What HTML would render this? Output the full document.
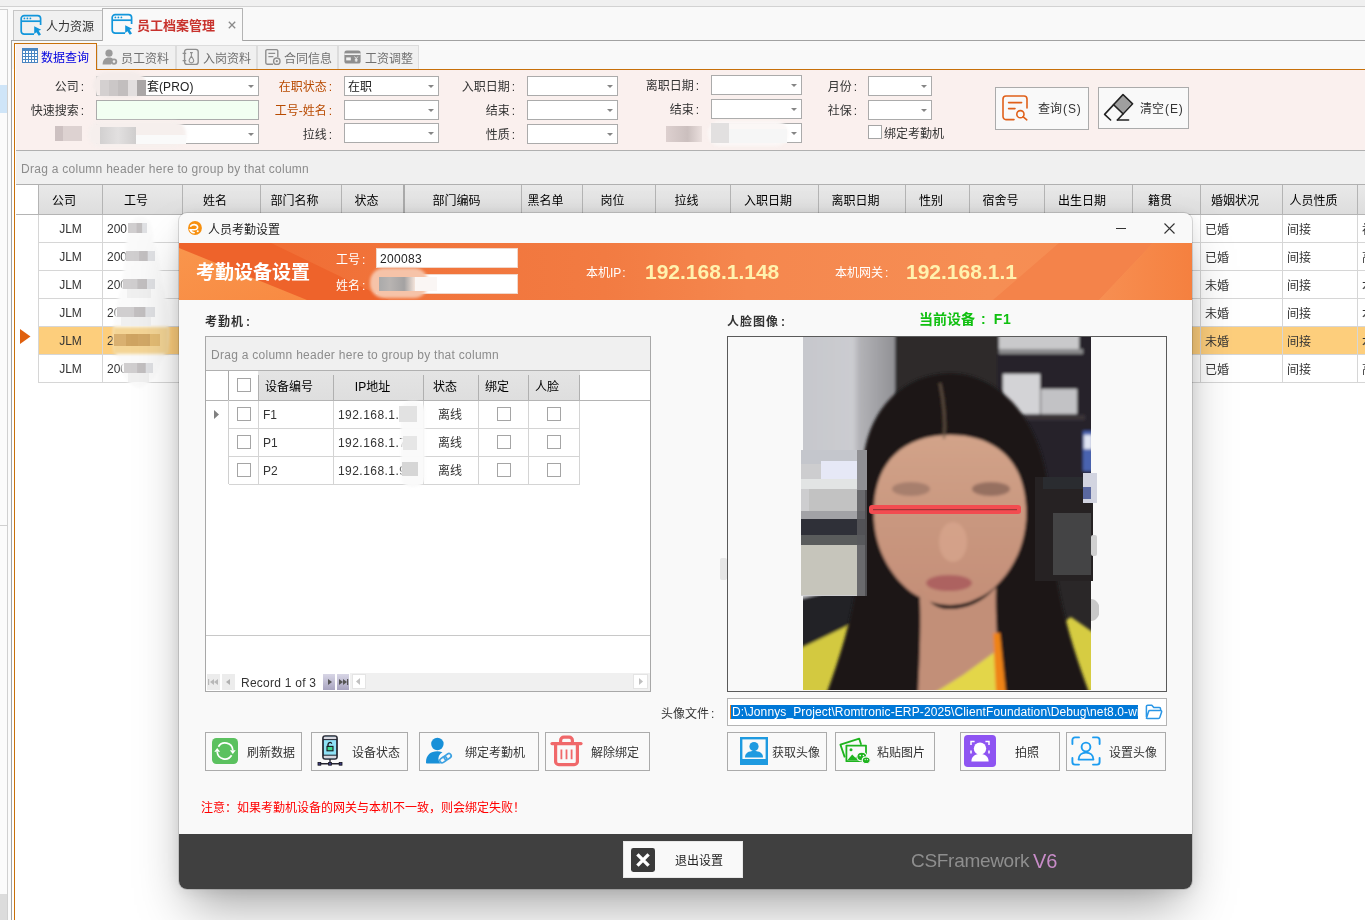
<!DOCTYPE html>
<html lang="zh-CN">
<head>
<meta charset="utf-8">
<title>员工档案管理 - 人员考勤设置</title>
<style>
*{box-sizing:border-box;margin:0;padding:0}
html,body{width:1365px;height:920px;overflow:hidden;background:#fff}
body{font-family:"Liberation Sans","Noto Sans CJK SC",sans-serif;font-size:12px;color:#333;-webkit-font-smoothing:antialiased}
#app{will-change:transform;position:relative;width:1365px;height:920px;overflow:hidden;background:#fff}
.a{position:absolute}
.t{position:absolute;white-space:nowrap;line-height:16px;height:16px}
.r{text-align:right}
.c{text-align:center}
/* main tabs */
.mtab{position:absolute;border:1px solid #c6c6c6;border-bottom:none;background:#f0f0f0}
/* sub tabs */
.stab{position:absolute;top:45px;height:24px;border:1px solid #dcdcdc;border-bottom:none;background:#f0f0f0;color:#707070}
.stab .t{top:5px}
/* combos */
.cb{position:absolute;height:20px;border:1px solid #ababab;background:#fff}
.cb:after{content:"";position:absolute;right:4px;top:8px;border:3px solid transparent;border-top:3px solid #858585;border-bottom:none}
.cb .t{left:3px;top:2px;color:#222}
.lb{position:absolute;white-space:nowrap;line-height:16px;height:16px;text-align:right;color:#333}
.btn{position:absolute;border:1px solid #ababab;background:#f9f9f9}
/* grid */
.hd{position:absolute;top:185px;height:29px;padding-right:13px;background:linear-gradient(#e9e9e9,#dddddd);border-right:1px solid #b4b4b4;color:#000;text-align:center;line-height:32px;white-space:nowrap}
.row{position:absolute;left:38px;width:1327px;height:28px;border-bottom:1px solid #d6d6d6}
.cell{position:absolute;top:0;height:27px;border-right:1px solid #d6d6d6;line-height:28px;white-space:nowrap;color:#333;overflow:hidden}
.sel .cell{background:#fdce7c}
.sel{background:#fdce7c}
.chk{position:absolute;width:14px;height:14px;border:1px solid #a5a5a5;background:#fff}
.lat{letter-spacing:.27px}
.lb i{font-style:normal;margin-left:2px}
.co{font-style:normal;margin-left:2px}
</style>
</head>
<body>
<div id="app">
<!-- ===== top chrome ===== -->
<div class="a" style="left:0;top:0;width:1365px;height:6px;background:#f0f0f0"></div>
<div class="a" style="left:0;top:6px;width:1365px;height:1px;background:#d2d2d2"></div>
<div class="a" style="left:0;top:7px;width:1365px;height:33px;background:#f9f9f9"></div>
<div class="a" style="left:0;top:40px;width:16px;height:880px;background:#fbfbfb"></div>
<!-- left dock strip -->
<div class="a" style="left:-1px;top:9px;width:9px;height:920px;border:1px solid #d0d0d0;background:#fbfbfb"></div>
<div class="a" style="left:0;top:85px;width:7px;height:28px;background:#cfe5f8"></div>
<div class="a" style="left:0;top:525px;width:7px;height:1px;background:#d0d0d0"></div>
<div class="a" style="left:0;top:894px;width:7px;height:26px;background:#dcdcdc"></div>
<!-- document frame -->
<div class="a" style="left:11px;top:40px;width:1360px;height:890px;border:1px solid #a2a2a2;background:#fff"></div>
<div class="a" style="left:12px;top:41px;width:1353px;height:28px;background:#f9f9f9"></div>

<!-- main tabs -->
<div class="mtab" style="left:13px;top:10px;width:90px;height:30px"></div>
<div class="mtab" style="left:102px;top:8px;width:141px;height:33px;background:#f9f9f9;border-color:#b4b4b4"></div>
<svg class="a" style="left:20px;top:14px" width="22" height="22" viewBox="0 0 22 22"><g fill="none" stroke="#1296db" stroke-width="1.7"><path d="M14 20.2H4.2a3 3 0 0 1-3-3V4.6a3 3 0 0 1 3-3h13.4a3 3 0 0 1 3 3V11"/><path d="M1.4 7.2h19"/></g><g fill="#1296db"><circle cx="4.4" cy="4.4" r=".9"/><circle cx="7.4" cy="4.4" r=".9"/><circle cx="10.4" cy="4.4" r=".9"/><path d="M14.2 12.2l7 3.6-2.6 1 2.4 3.6-2.2 1.4-2.4-3.6-2.2 1.8z"/></g></svg>
<div class="t" style="left:46px;top:19px;color:#333">人力资源</div>
<svg class="a" style="left:111px;top:13px" width="22" height="22" viewBox="0 0 22 22"><g fill="none" stroke="#1296db" stroke-width="1.7"><path d="M14 20.2H4.2a3 3 0 0 1-3-3V4.6a3 3 0 0 1 3-3h13.4a3 3 0 0 1 3 3V11"/><path d="M1.4 7.2h19"/></g><g fill="#1296db"><circle cx="4.4" cy="4.4" r=".9"/><circle cx="7.4" cy="4.4" r=".9"/><circle cx="10.4" cy="4.4" r=".9"/><path d="M14.2 12.2l7 3.6-2.6 1 2.4 3.6-2.2 1.4-2.4-3.6-2.2 1.8z"/></g></svg>
<div class="t" style="left:137px;top:18px;color:#c8322d;font-weight:bold;font-size:13px">员工档案管理</div>
<svg class="a" style="left:228px;top:21px" width="8" height="8" viewBox="0 0 8 8"><path d="M.8.8l6.4 6.4M7.2.8L.8 7.2" stroke="#8a8a8a" stroke-width="1.3" fill="none"/></svg>

<!-- ===== sub tabs ===== -->
<div class="a" style="left:14px;top:69px;width:1351px;height:1px;background:#c8700a"></div>
<div class="a" style="left:14px;top:43px;width:1px;height:877px;background:#c8700a"></div>
<div class="a" style="left:14px;top:43px;width:83px;height:27px;border:1px solid #c8700a;border-bottom:none;background:#faf0ee"></div>
<svg class="a" style="left:22px;top:48px" width="16" height="15" viewBox="0 0 16 15"><rect width="16" height="15" fill="#4a86c2"/><g fill="#fff"><rect x="1" y="3" width="2" height="2"/><rect x="4" y="3" width="2" height="2"/><rect x="7" y="3" width="2" height="2"/><rect x="10" y="3" width="2" height="2"/><rect x="13" y="3" width="2" height="2"/><rect x="1" y="6" width="2" height="2"/><rect x="4" y="6" width="2" height="2"/><rect x="7" y="6" width="2" height="2"/><rect x="10" y="6" width="2" height="2"/><rect x="13" y="6" width="2" height="2"/><rect x="1" y="9" width="2" height="2"/><rect x="4" y="9" width="2" height="2"/><rect x="7" y="9" width="2" height="2"/><rect x="10" y="9" width="2" height="2"/><rect x="13" y="9" width="2" height="2"/><rect x="1" y="12" width="2" height="2"/><rect x="4" y="12" width="2" height="2"/><rect x="7" y="12" width="2" height="2"/><rect x="10" y="12" width="2" height="2"/><rect x="13" y="12" width="2" height="2"/></g></svg>
<div class="t" style="left:41px;top:50px;color:#0000e0">数据查询</div>

<div class="stab" style="left:97px;width:79px"><div class="t" style="left:23px">员工资料</div></div>
<div class="stab" style="left:176px;width:81px"><div class="t" style="left:26px">入岗资料</div></div>
<div class="stab" style="left:257px;width:81px"><div class="t" style="left:26px">合同信息</div></div>
<div class="stab" style="left:338px;width:81px"><div class="t" style="left:26px">工资调整</div></div>
<!-- sub tab icons -->
<svg class="a" style="left:102px;top:49px" width="17" height="17" viewBox="0 0 17 17"><g fill="#9a9a9a"><circle cx="7" cy="4.2" r="3.6"/><path d="M0.6 15.6c0-4.4 2.6-7 6.4-7 1.6 0 3 .5 4 1.4l-2 5.6z"/><circle cx="12" cy="12.6" r="3.2"/></g><circle cx="12" cy="12.6" r="1.3" fill="#f0f0f0"/></svg>
<svg class="a" style="left:182px;top:48px" width="18" height="18" viewBox="0 0 18 18"><g fill="none" stroke="#8e8e8e" stroke-width="1.4"><rect x="2.6" y="1.4" width="13.6" height="15" rx="2.4"/><path d="M0.6 5.4h3.6M0.6 12.6h3.6"/><path d="M9.4 4.6v3.2M8 4.6h2.8M9.4 8l-2 3.4a2.3 2.3 0 1 0 4 0z" stroke-width="1.1"/></g></svg>
<svg class="a" style="left:264px;top:48px" width="18" height="18" viewBox="0 0 18 18"><g fill="none" stroke="#8e8e8e" stroke-width="1.4"><path d="M9 16.2H3.2a1.4 1.4 0 0 1-1.4-1.4V3a1.4 1.4 0 0 1 1.4-1.4h9.2A1.4 1.4 0 0 1 13.8 3v6"/><path d="M4.4 5.4h6.8M4.4 8.6h5"/><circle cx="12.8" cy="13.2" r="3.2"/></g><circle cx="12.8" cy="13.2" r="1.1" fill="#8e8e8e"/></svg>
<svg class="a" style="left:344px;top:50px" width="17" height="14" viewBox="0 0 17 14"><rect x="0.4" y="0.6" width="16.2" height="13" rx="2.2" fill="#8e8e8e"/><rect x="0.4" y="3.4" width="16.2" height="1.6" fill="#f0f0f0"/><rect x="2.2" y="7.4" width="4.6" height="3" fill="#f0f0f0"/><path d="M10.6 6.6l1.6 2.2 1.6-2.2M12.2 8.8v3M10.8 9.6h2.8M10.8 10.8h2.8" stroke="#f0f0f0" stroke-width=".9" fill="none"/></svg>

<!-- ===== filter panel ===== -->
<div class="a" style="left:15px;top:70px;width:1350px;height:80px;background:#faf0ee"></div>
<div class="a" style="left:15px;top:44px;width:1px;height:876px;background:#fff"></div>
<div class="a" style="left:16px;top:150px;width:1349px;height:1px;background:#b0b0b0"></div>
<div class="lb" style="right:1281px;top:79px">公司<i>:</i></div>
<div class="cb" style="left:96px;top:76px;width:163px"><div class="t"><span style="display:inline-block;width:47px"></span>套<span style="letter-spacing:.1px">(PRO)</span></div></div>
<div class="lb" style="right:1281px;top:103px">快速搜索<i>:</i></div>
<div class="a" style="left:96px;top:100px;width:163px;height:20px;border:1px solid #ababab;background:#f2fff2"></div>
<div class="cb" style="left:96px;top:124px;width:163px"></div>
<div class="lb" style="right:1033px;top:79px;color:#b84a00">在职状态<i>:</i></div>
<div class="cb" style="left:344px;top:76px;width:95px"><div class="t">在职</div></div>
<div class="lb" style="right:1033px;top:103px;color:#b84a00">工号-姓名<i>:</i></div>
<div class="cb" style="left:344px;top:100px;width:95px"></div>
<div class="lb" style="right:1033px;top:127px">拉线<i>:</i></div>
<div class="cb" style="left:344px;top:123px;width:95px"></div>
<div class="lb" style="right:850px;top:79px">入职日期<i>:</i></div>
<div class="cb" style="left:527px;top:76px;width:91px"></div>
<div class="lb" style="right:850px;top:103px">结束<i>:</i></div>
<div class="cb" style="left:527px;top:100px;width:91px"></div>
<div class="lb" style="right:850px;top:127px">性质<i>:</i></div>
<div class="cb" style="left:527px;top:124px;width:91px"></div>
<div class="lb" style="right:666px;top:78px">离职日期<i>:</i></div>
<div class="cb" style="left:711px;top:75px;width:91px"></div>
<div class="lb" style="right:666px;top:102px">结束<i>:</i></div>
<div class="cb" style="left:711px;top:99px;width:91px"></div>
<div class="cb" style="left:711px;top:123px;width:91px"></div>
<div class="lb" style="right:508px;top:79px">月份<i>:</i></div>
<div class="cb" style="left:868px;top:76px;width:64px"></div>
<div class="lb" style="right:508px;top:103px">社保<i>:</i></div>
<div class="cb" style="left:868px;top:100px;width:64px"></div>
<div class="chk" style="left:868px;top:125px"></div>
<div class="t" style="left:884px;top:126px">绑定考勤机</div>
<div class="btn" style="left:995px;top:87px;width:94px;height:43px"></div>
<svg class="a" style="left:1001px;top:94px" width="28" height="28" viewBox="0 0 28 28"><g fill="none" stroke="#e0601a" stroke-width="1.6" stroke-linecap="round"><path d="M13 25.6H5a3 3 0 0 1-3-3V5a3 3 0 0 1 3-3h18a3 3 0 0 1 3 3v9"/><path d="M7.6 8.6h13M7.6 14.6h6.4"/><circle cx="19.4" cy="20.2" r="3.6"/><path d="M22.2 22.8l3.6 3"/></g></svg>
<div class="t" style="left:1038px;top:101px">查询<span style="letter-spacing:.9px;margin-left:1px">(S)</span></div>
<div class="btn" style="left:1098px;top:87px;width:91px;height:42px"></div>
<svg class="a" style="left:1103px;top:93px" width="32" height="30" viewBox="0 0 32 30"><g fill="none" stroke="#222" stroke-width="1.6" stroke-linejoin="round" stroke-linecap="round"><path d="M7.6 27L1.6 21.4 20 1.6l9.6 9.2L14.4 27"/><path d="M14.4 27h11.2"/><path d="M10.6 11.6l9.6 9.2"/></g><path d="M20 2.6l8.4 8.2-8.2 9-8.6-8.2z" fill="#555" opacity=".55"/></svg>
<div class="t" style="left:1140px;top:101px">清空<span style="letter-spacing:.9px;margin-left:1px">(E)</span></div>
<div class="a" style="left:93px;top:72px;width:53px;height:26px;border-radius:13px;background:#f4ecea;filter:blur(1.2px)"></div>
<div class="a" style="left:100px;top:80px;width:46px;height:16px;background:linear-gradient(90deg,#d4d0d0 0 20%,#cbc7c7 20% 40%,#c2bebe 40% 60%,#e2dede 60% 80%,#aaa6a6 80%)"></div>
<div class="a" style="left:88px;top:121px;width:98px;height:26px;border-radius:13px;background:#f6efed;filter:blur(1.5px)"></div>
<div class="a" style="left:55px;top:126px;width:27px;height:15px;background:linear-gradient(90deg,#cdc1c1 0 30%,#ddd2d1 30%)"></div>
<div class="a" style="left:100px;top:127px;width:36px;height:17px;background:linear-gradient(90deg,#d2d0d0,#e2e0e0 50%,#cfcdcd)"></div>
<div class="a" style="left:136px;top:135px;width:50px;height:9px;background:#fafafa"></div>
<div class="a" style="left:708px;top:121px;width:80px;height:25px;border-radius:12px;background:#fbf7f6;filter:blur(1.5px)"></div>
<div class="a" style="left:666px;top:126px;width:36px;height:16px;background:linear-gradient(90deg,#ddd0cf,#cbbfbe 60%,#eadfdd)"></div>
<div class="a" style="left:711px;top:123px;width:18px;height:20px;background:#e2e0e0"></div>
<div class="a" style="left:729px;top:129px;width:58px;height:14px;background:#f6f6f6"></div>

<!-- ===== grid ===== -->
<div class="a" style="left:16px;top:151px;width:1349px;height:33px;background:#f0f0f0"></div>
<div class="t lat" style="left:21px;top:161px;color:#8c8c8c">Drag a column header here to group by that column</div>
<div class="a" style="left:16px;top:184px;width:1349px;height:1px;background:#b0b0b0"></div>
<div class="a" style="left:16px;top:185px;width:22px;height:735px;background:#fff"></div>
<div class="a" style="left:16px;top:214px;width:1349px;height:1px;background:#b4b4b4"></div>
<div class="a" style="left:38px;top:185px;width:1327px;height:29px;background:linear-gradient(#e9e9e9,#dddddd)"></div>
<div class="a" style="left:38px;top:185px;width:1px;height:29px;background:#b4b4b4"></div>
<div class="hd" style="left:39px;width:64px">公司</div>
<div class="hd" style="left:103px;width:80px">工号</div>
<div class="hd" style="left:183px;width:78px">姓名</div>
<div class="hd" style="left:261px;width:81px">部门名称</div>
<div class="hd" style="left:342px;width:63px">状态</div>
<div class="hd" style="left:405px;width:117px">部门编码</div>
<div class="hd" style="left:522px;width:61px">黑名单</div>
<div class="hd" style="left:583px;width:73px">岗位</div>
<div class="hd" style="left:656px;width:75px">拉线</div>
<div class="hd" style="left:731px;width:88px">入职日期</div>
<div class="hd" style="left:819px;width:87px">离职日期</div>
<div class="hd" style="left:906px;width:64px">性别</div>
<div class="hd" style="left:970px;width:75px">宿舍号</div>
<div class="hd" style="left:1045px;width:88px">出生日期</div>
<div class="hd" style="left:1133px;width:68px">籍贯</div>
<div class="hd" style="left:1201px;width:82px">婚姻状况</div>
<div class="hd" style="left:1283px;width:75px">人员性质</div>
<div class="hd" style="left:1358px;width:83px"></div>
<div class="a" style="left:403px;top:185px;width:2px;height:29px;background:#aaa"></div>
<div class="row" style="top:215px">
<div class="cell c" style="left:0;width:65px;border-left:1px solid #d6d6d6">JLM</div>
<div class="cell" style="left:65px;width:80px;padding-left:4px">200</div>
<div class="cell" style="left:1094px;width:69px"></div>
<div class="cell" style="left:1163px;width:82px;padding-left:4px;line-height:30px">已婚</div>
<div class="cell" style="left:1245px;width:75px;padding-left:4px;line-height:30px">间接</div>
<div class="cell" style="left:1320px;width:40px;padding-left:4px;line-height:30px;border-right:none">初中</div>
</div>
<div class="row" style="top:243px">
<div class="cell c" style="left:0;width:65px;border-left:1px solid #d6d6d6">JLM</div>
<div class="cell" style="left:65px;width:80px;padding-left:4px">200</div>
<div class="cell" style="left:1094px;width:69px"></div>
<div class="cell" style="left:1163px;width:82px;padding-left:4px;line-height:30px">已婚</div>
<div class="cell" style="left:1245px;width:75px;padding-left:4px;line-height:30px">间接</div>
<div class="cell" style="left:1320px;width:40px;padding-left:4px;line-height:30px;border-right:none">高中</div>
</div>
<div class="row" style="top:271px">
<div class="cell c" style="left:0;width:65px;border-left:1px solid #d6d6d6">JLM</div>
<div class="cell" style="left:65px;width:80px;padding-left:4px">200</div>
<div class="cell" style="left:1094px;width:69px"></div>
<div class="cell" style="left:1163px;width:82px;padding-left:4px;line-height:30px">未婚</div>
<div class="cell" style="left:1245px;width:75px;padding-left:4px;line-height:30px">间接</div>
<div class="cell" style="left:1320px;width:40px;padding-left:4px;line-height:30px;border-right:none">本科</div>
</div>
<div class="row" style="top:299px">
<div class="cell c" style="left:0;width:65px;border-left:1px solid #d6d6d6">JLM</div>
<div class="cell" style="left:65px;width:80px;padding-left:4px">200</div>
<div class="cell" style="left:1094px;width:69px"></div>
<div class="cell" style="left:1163px;width:82px;padding-left:4px;line-height:30px">未婚</div>
<div class="cell" style="left:1245px;width:75px;padding-left:4px;line-height:30px">间接</div>
<div class="cell" style="left:1320px;width:40px;padding-left:4px;line-height:30px;border-right:none">本科</div>
</div>
<div class="row sel" style="top:327px">
<div class="cell c" style="left:0;width:65px;border-left:1px solid #d6d6d6">JLM</div>
<div class="cell" style="left:65px;width:80px;padding-left:4px">200</div>
<div class="cell" style="left:1094px;width:69px"></div>
<div class="cell" style="left:1163px;width:82px;padding-left:4px;line-height:30px">未婚</div>
<div class="cell" style="left:1245px;width:75px;padding-left:4px;line-height:30px">间接</div>
<div class="cell" style="left:1320px;width:40px;padding-left:4px;line-height:30px;border-right:none">本科</div>
</div>
<div class="row" style="top:355px">
<div class="cell c" style="left:0;width:65px;border-left:1px solid #d6d6d6">JLM</div>
<div class="cell" style="left:65px;width:80px;padding-left:4px">200</div>
<div class="cell" style="left:1094px;width:69px"></div>
<div class="cell" style="left:1163px;width:82px;padding-left:4px;line-height:30px">已婚</div>
<div class="cell" style="left:1245px;width:75px;padding-left:4px;line-height:30px">间接</div>
<div class="cell" style="left:1320px;width:40px;padding-left:4px;line-height:30px;border-right:none">高中</div>
</div>
<svg class="a" style="left:20px;top:329px" width="11" height="15" viewBox="0 0 11 15"><path d="M0 0l10.5 7.5L0 15z" fill="#e0600e"/></svg>
<svg class="a" style="left:100px;top:210px" width="90" height="185" viewBox="100 210 90 185"><defs><filter id="rb" x="-20%" y="-10%" width="140%" height="120%"><feGaussianBlur stdDeviation="1.6"/></filter></defs><path d="M140 217C150 217 153 226 153 240C158 252 160 262 161 280C166 296 169 312 168 330C168 345 166 356 160 362C158 372 154 382 140 388C128 386 122 376 121 364C115 356 113 345 114 330C114 316 116 304 121 290C123 276 125 262 126 246C127 230 130 217 140 217Z" fill="#fafafa" filter="url(#rb)"/><rect x="113" y="327" width="56" height="27" fill="#f4d596" filter="url(#rb)"/><rect x="128" y="223" width="19" height="10" fill="#d0cecf"/><rect x="136.6" y="223" width="5.7" height="10" fill="#c2bfc0"/><rect x="142.2" y="223" width="4.8" height="10" fill="#dfe0e3"/><rect x="126" y="251" width="29" height="10" fill="#d0cecf"/><rect x="139.1" y="251" width="8.7" height="10" fill="#c2bfc0"/><rect x="147.8" y="251" width="7.2" height="10" fill="#dfe0e3"/><rect x="123" y="279" width="32" height="10" fill="#d0cecf"/><rect x="137.4" y="279" width="9.6" height="10" fill="#c2bfc0"/><rect x="147.0" y="279" width="8.0" height="10" fill="#dfe0e3"/><rect x="127" y="289" width="24" height="9" fill="#f0f0f0"/><rect x="117" y="307" width="38" height="10" fill="#d0cecf"/><rect x="134.1" y="307" width="11.4" height="10" fill="#c2bfc0"/><rect x="145.5" y="307" width="9.5" height="10" fill="#dfe0e3"/><rect x="121" y="317" width="30" height="9" fill="#f0f0f0"/><rect x="114" y="334" width="46" height="12" fill="#d9b070"/><rect x="126" y="334" width="12" height="12" fill="#cfa462"/><rect x="138" y="334" width="12" height="12" fill="#d2a866"/><rect x="150" y="334" width="10" height="12" fill="#e4bc74"/><rect x="124" y="363" width="29" height="10" fill="#d0cecf"/><rect x="137.1" y="363" width="8.7" height="10" fill="#c2bfc0"/><rect x="145.8" y="363" width="7.2" height="10" fill="#dfe0e3"/><rect x="128" y="373" width="21" height="9" fill="#f0f0f0"/></svg>
<!-- GRID-ROWS-END -->

<!-- DIALOG-START -->
<div class="a" id="dlg" style="left:179px;top:213px;width:1013px;height:676px;border-radius:8px;background:#f9f9f9;box-shadow:0 0 0 1px rgba(0,0,0,.13),0 26px 48px -10px rgba(0,0,0,.36),0 2px 14px rgba(0,0,0,.08);overflow:hidden">
<svg class="a" style="left:9px;top:8px" width="14" height="14" viewBox="0 0 15 15"><circle cx="7.500" cy="7.500" r="7.400" fill="#f7900f"/><path d="M3 5.400c1.600-2.200 6.400-2.200 7.200.6.700 2.600-2 3.400-4 3.400H2.400c.6 1.800 2.400 3 4.200 3.200" fill="none" stroke="#fff" stroke-width="1.800" stroke-linecap="round"/><circle cx="10.400" cy="11" r="1.100" fill="#fff"/></svg>
<div class="t" style="left:29px;top:9px;color:#222">人员考勤设置</div>
<div class="a" style="left:937px;top:15px;width:10px;height:1px;background:#333"></div>
<svg class="a" style="left:985px;top:10px" width="11" height="11" viewBox="0 0 11 11"><path d="M.5.5l10 10M10.5.5l-10 10" stroke="#333" stroke-width="1.1" fill="none"/></svg>
<svg class="a" style="left:0;top:30px" width="1014" height="57" viewBox="0 0 1014 57"><defs><linearGradient id="bg" x1="0" x2="1014" y1="0" y2="0" gradientUnits="userSpaceOnUse"><stop offset="0" stop-color="#ef6a30"/><stop offset=".2" stop-color="#f1733a"/><stop offset=".42" stop-color="#f27b42"/><stop offset=".56" stop-color="#f5874e"/><stop offset=".8" stop-color="#f68e54"/><stop offset="1" stop-color="#f68c50"/></linearGradient><linearGradient id="tri" x1="0" x2="1" y1="0" y2="1"><stop offset="0" stop-color="#f9954c"/><stop offset="1" stop-color="#f88a42"/></linearGradient><linearGradient id="rc" x1="920" x2="1014" y1="0" y2="0" gradientUnits="userSpaceOnUse"><stop offset="0" stop-color="#f78f52"/><stop offset="1" stop-color="#f5803f"/></linearGradient></defs><rect width="1014" height="57" fill="url(#bg)"/><path d="M0 0h92l118 57H0z" fill="#ee632b"/><path d="M0 5l128 52H0z" fill="url(#tri)"/><path d="M880 0h94l-54 57H814z" fill="#f4834a"/><path d="M974 0h40v57h-94z" fill="url(#rc)"/></svg>
<div class="t" style="left:17px;top:47px;font-size:19px;font-weight:bold;color:#fff;line-height:26px;height:26px">考勤设备设置</div>
<div class="t" style="left:157px;top:39px;color:#fff">工号<i class="co">:</i></div>
<div class="t" style="left:157px;top:65px;color:#fff">姓名<i class="co">:</i></div>
<div class="a" style="left:197px;top:35px;width:142px;height:20px;background:#fff;border:1px solid #f0d8cc"></div>
<div class="t" style="left:201px;top:38px;color:#222;letter-spacing:.33px">200083</div>
<div class="a" style="left:197px;top:61px;width:142px;height:20px;background:#fff;border:1px solid #f0d8cc"></div>
<div class="a" style="left:191px;top:55px;width:58px;height:30px;border-radius:14px;background:#f6c3a8;filter:blur(1.5px)"></div>
<div class="a" style="left:200px;top:64px;width:36px;height:14px;background:linear-gradient(90deg,#aaa,#b8b4b2 30%,#a4a2a2 70%,#f4e4da)"></div>
<div class="a" style="left:236px;top:64px;width:22px;height:14px;background:#faf6f4"></div>
<div class="t" style="left:407px;top:52px;color:#fff">本机IP<i class="co" style="margin-left:1px">:</i></div>
<div class="t" style="left:466px;top:46px;font-size:21px;font-weight:bold;color:#fff2ae;line-height:26px;height:26px">192.168.1.148</div>
<div class="t" style="left:656px;top:52px;color:#fff">本机网关<i class="co">:</i></div>
<div class="t" style="left:727px;top:46px;font-size:21px;font-weight:bold;color:#fff2ae;line-height:26px;height:26px">192.168.1.1</div>
<div class="t" style="left:26px;top:101px;font-weight:bold;color:#333;letter-spacing:1px">考勤机<i class="co">:</i></div>
<div class="t" style="left:548px;top:101px;font-weight:bold;color:#333;letter-spacing:1px">人脸图像<i class="co">:</i></div>
<div class="t" style="left:740px;top:96px;font-weight:bold;font-size:14px;color:#10c010;line-height:20px;height:20px">当前设备<i class="co" style="margin-left:6px">:</i><span style="margin-left:8px;letter-spacing:.8px">F1</span></div>
<div class="a" style="left:26px;top:123px;width:446px;height:356px;border:1px solid #a8a8a8;background:#fff"></div>
<div class="a" style="left:27px;top:124px;width:444px;height:33px;background:#f0f0f0"></div>
<div class="t" style="left:32px;top:134px;color:#8c8c8c;letter-spacing:.27px">Drag a column header here to group by that column</div>
<div class="a" style="left:27px;top:157px;width:444px;height:1px;background:#b0b0b0"></div>
<div class="a" style="left:27px;top:187px;width:444px;height:1px;background:#b4b4b4"></div>
<div class="a" style="left:49px;top:158px;width:1px;height:113px;background:#d0d0d0"></div>
<div class="a" style="left:49px;top:158px;width:1px;height:29px;background:#a8a8a8"></div>
<div class="a" style="left:79px;top:158px;width:322px;height:29px;background:linear-gradient(#e4e4e4,#dedede)"></div>
<div class="a" style="left:79px;top:162px;width:1px;height:25px;background:#b0b0b0"></div>
<div class="a" style="left:80px;top:158px;width:74px;height:29px;line-height:33px;color:#000;white-space:nowrap;padding-left:6px">设备编号</div>
<div class="a" style="left:154px;top:162px;width:1px;height:25px;background:#b0b0b0"></div>
<div class="a" style="left:155px;top:158px;width:89px;height:29px;text-align:center;line-height:33px;color:#000;white-space:nowrap;padding-right:12px">IP地址</div>
<div class="a" style="left:244px;top:162px;width:1px;height:25px;background:#b0b0b0"></div>
<div class="a" style="left:245px;top:158px;width:54px;height:29px;text-align:center;line-height:33px;color:#000;white-space:nowrap;padding-right:12px">状态</div>
<div class="a" style="left:299px;top:162px;width:1px;height:25px;background:#b0b0b0"></div>
<div class="a" style="left:300px;top:158px;width:49px;height:29px;line-height:33px;color:#000;white-space:nowrap;padding-left:6px">绑定</div>
<div class="a" style="left:349px;top:162px;width:1px;height:25px;background:#b0b0b0"></div>
<div class="a" style="left:350px;top:158px;width:50px;height:29px;line-height:33px;color:#000;white-space:nowrap;padding-left:6px">人脸</div>
<div class="a" style="left:400px;top:162px;width:1px;height:25px;background:#b0b0b0"></div>
<div class="chk" style="left:58px;top:165px;width:14px;height:14px;"></div>
<div class="a" style="left:50px;top:215px;width:351px;height:1px;background:#d4d4d4"></div>
<div class="a" style="left:79px;top:188px;width:1px;height:28px;background:#d4d4d4"></div>
<div class="a" style="left:154px;top:188px;width:1px;height:28px;background:#d4d4d4"></div>
<div class="a" style="left:244px;top:188px;width:1px;height:28px;background:#d4d4d4"></div>
<div class="a" style="left:299px;top:188px;width:1px;height:28px;background:#d4d4d4"></div>
<div class="a" style="left:349px;top:188px;width:1px;height:28px;background:#d4d4d4"></div>
<div class="a" style="left:400px;top:188px;width:1px;height:28px;background:#d4d4d4"></div>
<div class="chk" style="left:58px;top:194px;width:14px;height:14px;"></div>
<div class="t" style="left:84px;top:194px;">F1</div>
<div class="t" style="left:159px;top:194px;letter-spacing:.45px">192.168.1.</div>
<div class="t" style="left:259px;top:194px;">离线</div>
<div class="chk" style="left:318px;top:194px;width:14px;height:14px;"></div>
<div class="chk" style="left:368px;top:194px;width:14px;height:14px;"></div>
<div class="a" style="left:50px;top:243px;width:351px;height:1px;background:#d4d4d4"></div>
<div class="a" style="left:79px;top:216px;width:1px;height:28px;background:#d4d4d4"></div>
<div class="a" style="left:154px;top:216px;width:1px;height:28px;background:#d4d4d4"></div>
<div class="a" style="left:244px;top:216px;width:1px;height:28px;background:#d4d4d4"></div>
<div class="a" style="left:299px;top:216px;width:1px;height:28px;background:#d4d4d4"></div>
<div class="a" style="left:349px;top:216px;width:1px;height:28px;background:#d4d4d4"></div>
<div class="a" style="left:400px;top:216px;width:1px;height:28px;background:#d4d4d4"></div>
<div class="chk" style="left:58px;top:222px;width:14px;height:14px;"></div>
<div class="t" style="left:84px;top:222px;">P1</div>
<div class="t" style="left:159px;top:222px;letter-spacing:.45px">192.168.1.7</div>
<div class="t" style="left:259px;top:222px;">离线</div>
<div class="chk" style="left:318px;top:222px;width:14px;height:14px;"></div>
<div class="chk" style="left:368px;top:222px;width:14px;height:14px;"></div>
<div class="a" style="left:50px;top:271px;width:351px;height:1px;background:#d4d4d4"></div>
<div class="a" style="left:79px;top:244px;width:1px;height:28px;background:#d4d4d4"></div>
<div class="a" style="left:154px;top:244px;width:1px;height:28px;background:#d4d4d4"></div>
<div class="a" style="left:244px;top:244px;width:1px;height:28px;background:#d4d4d4"></div>
<div class="a" style="left:299px;top:244px;width:1px;height:28px;background:#d4d4d4"></div>
<div class="a" style="left:349px;top:244px;width:1px;height:28px;background:#d4d4d4"></div>
<div class="a" style="left:400px;top:244px;width:1px;height:28px;background:#d4d4d4"></div>
<div class="chk" style="left:58px;top:250px;width:14px;height:14px;"></div>
<div class="t" style="left:84px;top:250px;">P2</div>
<div class="t" style="left:159px;top:250px;letter-spacing:.45px">192.168.1.9</div>
<div class="t" style="left:259px;top:250px;">离线</div>
<div class="chk" style="left:318px;top:250px;width:14px;height:14px;"></div>
<div class="chk" style="left:368px;top:250px;width:14px;height:14px;"></div>
<svg class="a" style="left:35px;top:197px" width="5" height="9" viewBox="0 0 5 9"><path d="M0 0l5 4.5L0 9z" fill="#808080"/></svg>
<div class="a" style="left:222px;top:188px;width:24px;height:86px;border-radius:10px;background:rgba(250,250,250,.97);filter:blur(1.2px)"></div>
<div class="a" style="left:220px;top:193px;width:18px;height:16px;background:#e2e2e2"></div>
<div class="a" style="left:224px;top:223px;width:14px;height:14px;background:#e6e6e6"></div>
<div class="a" style="left:223px;top:249px;width:16px;height:14px;background:#d6d6d6"></div>
<div class="a" style="left:27px;top:422px;width:444px;height:1px;background:#c8c8c8"></div>
<div class="a" style="left:27px;top:460px;width:444px;height:18px;background:#f0f0f0"></div>
<div class="a" style="left:27px;top:460px;width:144px;height:18px;background:#fff"></div>
<div class="a" style="left:28px;top:461px;width:13px;height:16px;background:#ececec"></div>
<div class="a" style="left:43px;top:461px;width:13px;height:16px;background:#ececec"></div>
<div class="a" style="left:144px;top:461px;width:12px;height:16px;background:linear-gradient(#d8d6e6,#a8a4c0)"></div>
<div class="a" style="left:158px;top:461px;width:12px;height:16px;background:linear-gradient(#d8d6e6,#a8a4c0)"></div>
<div class="a" style="left:173px;top:461px;width:14px;height:15px;background:#fff;border:1px solid #e4e4e4"></div>
<div class="a" style="left:454px;top:461px;width:15px;height:15px;background:#fff;border:1px solid #e4e4e4"></div>
<svg class="a" style="left:0;top:0" width="1014" height="676" viewBox="0 0 1014 676"><rect x="29" y="466" width="1.2" height="6" fill="#b8b8b8"/><path transform="translate(31,466)" d="M4 0L0 3.0L4 6z" fill="#b8b8b8"/><path transform="translate(35,466)" d="M4 0L0 3.0L4 6z" fill="#b8b8b8"/><path transform="translate(47,466)" d="M4 0L0 3.0L4 6z" fill="#b0b0b0"/><path transform="translate(149,466)" d="M0 0L4 3.0L0 6z" fill="#555"/><path transform="translate(160,466)" d="M0 0L4 3.0L0 6z" fill="#555"/><path transform="translate(164,466)" d="M0 0L4 3.0L0 6z" fill="#555"/><rect x="168" y="466" width="1.2" height="6" fill="#555"/><path transform="translate(177,465)" d="M4 0L0 3.5L4 7z" fill="#c0c0c0"/><path transform="translate(460,465)" d="M0 0L4 3.5L0 7z" fill="#c0c0c0"/></svg>
<div class="t" style="left:62px;top:462px;color:#333;letter-spacing:.25px">Record 1 of 3</div>
<div class="btn" style="left:26px;top:519px;width:97px;height:39px;"></div>
<div class="t" style="left:68px;top:532px;">刷新数据</div>
<div class="btn" style="left:132px;top:519px;width:97px;height:39px;"></div>
<div class="t" style="left:173px;top:532px;">设备状态</div>
<div class="btn" style="left:240px;top:519px;width:120px;height:39px;"></div>
<div class="t" style="left:286px;top:532px;">绑定考勤机</div>
<div class="btn" style="left:366px;top:519px;width:105px;height:39px;"></div>
<div class="t" style="left:412px;top:532px;">解除绑定</div>
<svg class="a" style="left:33px;top:525px" width="26" height="26" viewBox="0 0 26 26"><rect width="26" height="26" rx="4.4" fill="#5bc15f"/><g fill="none" stroke="#fff" stroke-width="1.700"><path d="M6.400 8.700A7.800 7.800 0 0 1 20.800 12"/><path d="M19.600 17.300A7.800 7.800 0 0 1 5.200 14"/></g><path d="M17.900 12.200h5.800l-2.900 3.800zM2.300 13.800h5.800L5.200 10z" fill="#fff"/></svg>
<svg class="a" style="left:138px;top:522px" width="26" height="32" viewBox="0 0 26 32"><rect x="6" y="1" width="14" height="23" rx="2.200" fill="#8fe2f6" stroke="#22222c" stroke-width="1.700"/><rect x="6.800" y="1.800" width="12.400" height="2.600" fill="#d8d8e0"/><rect x="6.800" y="20.400" width="12.400" height="2.800" fill="#d8d8e0"/><path d="M6 4.600h14M6 20.200h14" stroke="#22222c" stroke-width="1"/><path d="M11 11.400V9.400a2 2 0 0 1 3.800-.8" fill="none" stroke="#16161c" stroke-width="1.300"/><rect x="10" y="11.400" width="6" height="4.400" fill="#3fdc92" stroke="#16161c" stroke-width="1.100"/><path d="M13 24v4.600M2.400 28.800h21.200" stroke="#22222c" stroke-width="1.400" fill="none"/><g fill="#3c3c80" stroke="#16161c" stroke-width=".8"><rect x="1" y="27.400" width="2.800" height="2.800"/><rect x="11.600" y="27.400" width="2.800" height="2.800"/><rect x="22.200" y="27.400" width="2.800" height="2.800"/></g></svg>
<svg class="a" style="left:246px;top:524px" width="30" height="30" viewBox="0 0 30 30"><g fill="#1890d8"><circle cx="12.400" cy="7" r="6.200"/><path d="M1 25.400c0-7.400 4.600-11.200 11.400-11.200 3 0 5.600.8 7.600 2.600L17 26.600H2a1 1 0 0 1-1-1.200z"/></g><circle cx="20.400" cy="21.600" r="7" fill="#f9f9f9"/><g fill="none" stroke="#3ea2e2" stroke-width="1.700" stroke-linecap="round"><rect x="14.600" y="20.400" width="7.400" height="4.600" rx="2.300" transform="rotate(-35 18.300 22.700)"/><rect x="19" y="17.400" width="7.400" height="4.600" rx="2.300" transform="rotate(-35 22.700 19.700)"/></g></svg>
<svg class="a" style="left:371px;top:522px" width="33" height="32" viewBox="0 0 33 32"><g fill="none" stroke="#f0686a" stroke-width="3.200" stroke-linecap="round" stroke-linejoin="round"><path d="M2 8.600h29"/><path d="M10.600 8V5.400a3.200 3.200 0 0 1 3.200-3.200h5.400a3.200 3.200 0 0 1 3.200 3.200V8"/><path d="M5.600 9.400v17a3.200 3.200 0 0 0 3.200 3.200h15.400a3.200 3.200 0 0 0 3.200-3.200v-17"/></g><g stroke="#f0686a" stroke-width="1.800" fill="none"><path d="M11.400 14.600v9.600M16.500 14.600v9.600M21.600 14.600v9.600"/></g></svg>
<div class="t" style="left:22px;top:587px;color:#ff0000">注意：如果考勤机设备的网关与本机不一致，则会绑定失败！</div>
<div class="a" style="left:548px;top:123px;width:440px;height:356px;border:1px solid #5a5a5a;background:#f9f9f9"></div>
<!-- PHOTO-START --><svg class="a" style="left:616px;top:124px" width="304" height="353" viewBox="-8 0 304 353">
<defs><filter id="bl" x="-5%" y="-5%" width="110%" height="110%"><feGaussianBlur stdDeviation="1.6"/></filter>
<filter id="bl2" x="-5%" y="-5%" width="110%" height="110%"><feGaussianBlur stdDeviation="3"/></filter>
<clipPath id="pc"><rect x="0" y="0" width="288" height="353"/></clipPath>
<linearGradient id="wall" x1="0" x2="1" y1="0" y2="0"><stop offset="0" stop-color="#c6c7cc"/><stop offset=".55" stop-color="#cbccd0"/><stop offset=".62" stop-color="#b2b2b6"/><stop offset="1" stop-color="#8f8f93"/></linearGradient>
<linearGradient id="skin" x1="0" x2="0" y1="0" y2="1"><stop offset="0" stop-color="#d2a389"/><stop offset=".5" stop-color="#c9977f"/><stop offset="1" stop-color="#c48e77"/></linearGradient>
</defs>
<g clip-path="url(#pc)">
<rect x="0" y="0" width="288" height="353" fill="#2a2728"/>
<g filter="url(#bl)">
<rect x="-4" y="-4" width="98" height="270" fill="url(#wall)"/>
<rect x="92" y="-4" width="104" height="120" fill="#2e2a2b"/>
<rect x="194" y="-4" width="100" height="200" fill="#25232a"/>
<rect x="196" y="-4" width="80" height="16" fill="#c9c9cb"/>
<rect x="196" y="12" width="84" height="5" fill="#8a8a8c"/>
<rect x="200" y="37" width="37" height="40" fill="#d3d3d6"/>
<rect x="238" y="52" width="36" height="25" fill="#c2c2c5"/>
<rect x="196" y="78" width="86" height="5" fill="#3a3638"/>
<rect x="280" y="94" width="10" height="40" fill="#4a64b0"/>
<rect x="281" y="98" width="8" height="14" fill="#dfe4f2"/>
<path d="M-4 262l66-16v60l-66 26z" fill="#242428"/>
<path d="M-4 312l50-24 26 8-12 62h-64z" fill="#d3c940"/>
<path d="M252 290l16-10 26 18v60h-50z" fill="#d6cc42"/>
</g>
<g filter="url(#bl)">
<path d="M147 36c-46 0-80 36-86 82-5 40-3 84-8 128-4 36-16 74-30 112h120l20-50 20 50h104c-12-32-22-62-30-100-8-40-6-92-16-132-12-50-48-90-94-90z" fill="#1b1819"/>
<path d="M147 98C100 98 73 125 71 170C69 205 84 236 108 255C122 264 134 268 147 268C160 268 172 264 186 255C210 236 225 205 223 170C221 125 194 98 147 98Z" fill="url(#skin)"/>
<path d="M116 250c2 20 2 50-1 108h84c-5-50-7-84-6-108-14 16-30 22-46 22s-22-8-31-22z" fill="#c28f78"/>
<path d="M128 358l32-20 36-26 6 46z" fill="#e3d648"/>
<path d="M190 296l7 0 6 60h-10z" fill="#ef8318"/>
<path d="M137 46c4 20 6 36 4 56" stroke="#7a6450" stroke-width="2.400" fill="none" opacity=".7"/>
<ellipse cx="146" cy="246" rx="23" ry="8" fill="#ad6260"/>
<ellipse cx="108" cy="152" rx="19" ry="7" fill="#a07a6a" opacity=".85"/>
<ellipse cx="188" cy="152" rx="19" ry="7" fill="#8c675a" opacity=".85"/>
<ellipse cx="150" cy="205" rx="14" ry="20" fill="#d8a68e" opacity=".7"/>
</g>
</g>
<!-- mosaic patches -->
<g>
<rect x="-2" y="113" width="64" height="146" fill="#cdcdcf"/>
<rect x="-2" y="113" width="64" height="14" fill="#c4c6cc"/>
<rect x="18" y="124" width="36" height="18" fill="#e6e8f6"/>
<rect x="-2" y="142" width="56" height="10" fill="#e2e4e4"/>
<rect x="6" y="152" width="48" height="22" fill="#c2c2c2"/>
<rect x="-2" y="174" width="64" height="8" fill="#a2a2a6"/>
<rect x="-2" y="182" width="64" height="16" fill="#2f3038"/>
<rect x="-2" y="198" width="64" height="10" fill="#5a5c5c"/>
<rect x="-2" y="208" width="56" height="50" fill="#c6c5bb"/>
<rect x="54" y="113" width="10" height="146" fill="#58585c" opacity=".85"/>
<rect x="54" y="113" width="10" height="40" fill="#909094"/>
<rect x="232" y="140" width="58" height="104" fill="#262223"/>
<rect x="250" y="176" width="38" height="62" fill="#444445"/>
<rect x="240" y="140" width="48" height="12" fill="#2a2c30"/>
<rect x="280" y="136" width="14" height="30" fill="#d2d4e0"/>
<rect x="280" y="150" width="8" height="12" fill="#5a68a0"/>
<rect x="288" y="198" width="6" height="21" rx="2" fill="#d0d0d0"/>
<path d="M288 262a8 10 0 0 1 0 22z" fill="#c8c8c8"/>
</g>
<rect x="66" y="168" width="152" height="9" rx="3" fill="#f24c50"/>
<rect x="70" y="172" width="144" height="1.200" fill="#8a3030" opacity=".8"/>
</svg>
<div class="a" style="left:541px;top:345px;width:7px;height:22px;border-radius:2px;background:#e6e6e6"></div><!-- PHOTO-END -->
<div class="t" style="left:482px;top:493px;">头像文件<i class="co">:</i></div>
<div class="a" style="left:548px;top:485px;width:440px;height:28px;border:1px solid #b4b4b4;background:#fff"></div>
<div class="a" style="left:552px;top:492px;width:407px;height:14px;background:#0078d7;overflow:hidden"><div class="t" style="left:1px;top:-1px;color:#fff;letter-spacing:.12px">D:\Jonnys_Project\Romtronic-ERP-2025\ClientFoundation\Debug\net8.0-windows</div></div>
<div class="a" style="left:551px;top:492px;width:1px;height:14px;background:#f08020"></div>
<svg class="a" style="left:966px;top:491px" width="18" height="16" viewBox="0 0 18 16"><g fill="none" stroke="#2a96e6" stroke-width="1.5" stroke-linejoin="round"><path d="M1.400 13V2.600a1.400 1.400 0 0 1 1.400-1.400h4l2 2.400h5.400a1.400 1.400 0 0 1 1.400 1.400v1.400"/><path d="M1.400 14.200l2.200-6.800a1.200 1.200 0 0 1 1.200-.8h10.800a1 1 0 0 1 1 1.400l-1.800 5.400a1.400 1.400 0 0 1-1.400 1H2.400a1 1 0 0 1-1-.2z"/></g></svg>
<div class="btn" style="left:548px;top:519px;width:100px;height:39px;"></div>
<div class="t" style="left:593px;top:532px;">获取头像</div>
<div class="btn" style="left:656px;top:519px;width:100px;height:39px;"></div>
<div class="t" style="left:698px;top:532px;">粘贴图片</div>
<div class="btn" style="left:781px;top:519px;width:100px;height:39px;"></div>
<div class="t" style="left:836px;top:532px;">拍照</div>
<div class="btn" style="left:887px;top:519px;width:100px;height:39px;"></div>
<div class="t" style="left:930px;top:532px;">设置头像</div>
<svg class="a" style="left:561px;top:524px" width="28" height="28" viewBox="0 0 28 28"><rect width="28" height="28" fill="#1e9ae0"/><rect x="2.400" y="2.400" width="23.200" height="19.600" fill="#f9f9f9"/><g fill="#1e9ae0"><circle cx="14" cy="9.600" r="4.600"/><path d="M5 20.400c0-4.400 3.600-6.400 9-6.400s9 2 9 6.400z"/></g></svg>
<svg class="a" style="left:660px;top:524px" width="32" height="28" viewBox="0 0 32 28"><g fill="none" stroke="#1eb41e" stroke-width="1.800" stroke-linejoin="round"><path d="M5.800 20.400L1.400 7.600 20.200 1.600l2 6.200"/><rect x="7.400" y="8.600" width="19.600" height="15.600"/></g><g fill="#1eb41e"><circle cx="12" cy="12.800" r="1.500"/><path d="M8.600 23l4.600-5.600 3.200 3.400 2-2 2 2.600v1.600z"/></g><g fill="#1eb41e" stroke="#f9f9f9" stroke-width="1.200"><ellipse cx="22.800" cy="19.600" rx="5" ry="4.400"/><ellipse cx="27.200" cy="23.200" rx="4" ry="3.400"/></g><g fill="#f9f9f9"><circle cx="21.200" cy="18.600" r=".8"/><circle cx="24.400" cy="18.600" r=".8"/><circle cx="26.200" cy="22.600" r=".6"/><circle cx="28.400" cy="22.600" r=".6"/></g></svg>
<svg class="a" style="left:785px;top:522px" width="32" height="32" viewBox="0 0 32 32"><rect width="32" height="32" rx="3.800" fill="#8e54f2"/><g fill="#fff"><circle cx="16" cy="13.600" r="6.200"/><path d="M7.400 26.600c0-5 3.400-7.600 8.600-7.600s8.600 2.600 8.600 7.600z"/></g><g fill="none" stroke="#fff" stroke-width="1.500"><path d="M7 10V6.400h3.600M21.400 6.400H25V10M7 15.400v3M25 15.400v3"/></g></svg>
<svg class="a" style="left:892px;top:523px" width="30" height="30" viewBox="0 0 30 30"><g fill="none" stroke="#1c9cf0" stroke-width="1.900" stroke-linecap="round"><path d="M1.400 8V4a2.600 2.600 0 0 1 2.600-2.600h4M22 1.400h4A2.600 2.600 0 0 1 28.600 4v4M28.600 22v4a2.600 2.600 0 0 1-2.600 2.600h-4M8 28.600H4A2.600 2.600 0 0 1 1.400 26v-4"/><circle cx="15" cy="11" r="4.400"/><path d="M7.600 23.600c0-4.600 3.200-7 7.400-7s7.400 2.400 7.400 7z" stroke-linejoin="round"/></g></svg>
<div class="a" style="left:0px;top:621px;width:1013px;height:56px;background:#404040"></div>
<div class="a" style="left:444px;top:628px;width:120px;height:37px;background:#f9f9f9;border:1px solid #e8e8e8"></div>
<svg class="a" style="left:452px;top:635px" width="24" height="24" viewBox="0 0 24 24"><rect width="24" height="24" rx="2.400" fill="#3a3a3a"/><path d="M6.400 6.400l11.200 11.200M17.600 6.400L6.400 17.600" stroke="#fff" stroke-width="3.400" fill="none"/></svg>
<div class="t" style="left:496px;top:640px;color:#222">退出设置</div>
<div class="t" style="left:732px;top:635px;font-size:19px;color:#8e8e8e;line-height:26px;height:26px;letter-spacing:-.3px">CSFramework</div>
<div class="t" style="left:854px;top:635px;font-size:20px;color:#c88cc8;line-height:26px;height:26px">V6</div>
</div>
<!-- DIALOG-END -->
</div>
</body>
</html>
